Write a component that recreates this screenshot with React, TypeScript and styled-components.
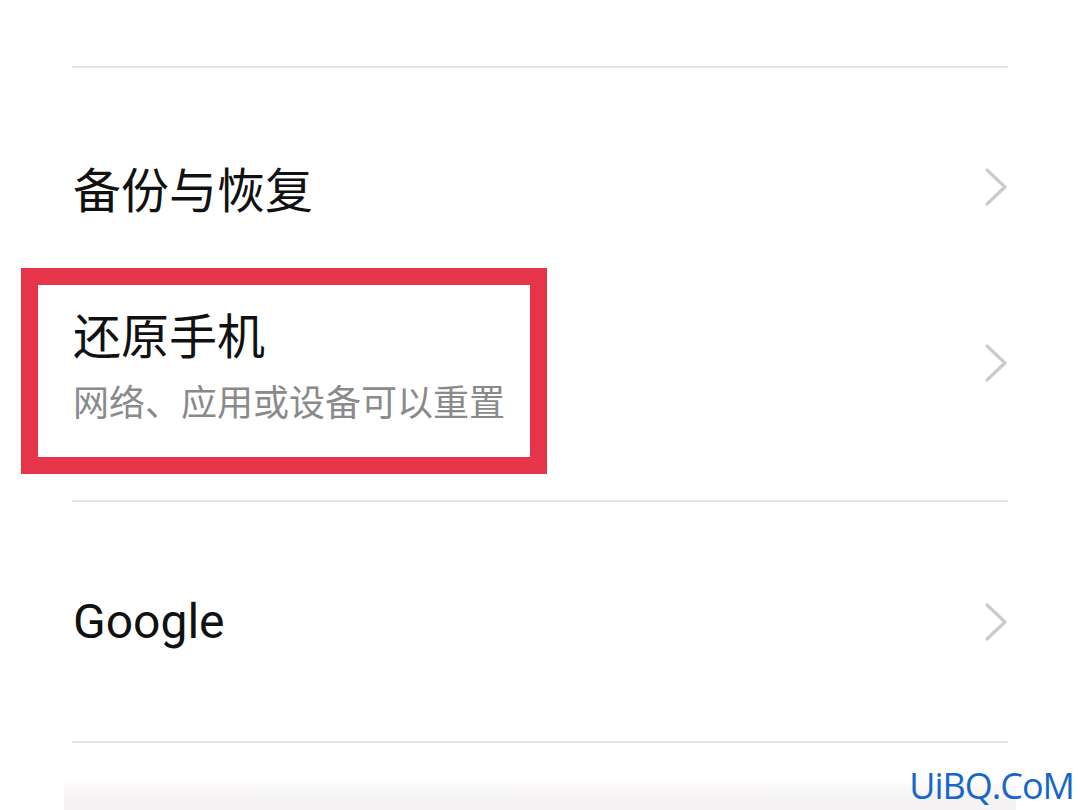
import React from "react";
import styled, { createGlobalStyle } from "styled-components";

const GlobalStyle = createGlobalStyle`
  html, body { margin: 0; padding: 0; background: #ffffff; }
  body { width: 1080px; height: 810px; overflow: hidden; }
  * { box-sizing: border-box; }
`;

const Screen = styled.div`
  position: relative;
  width: 1080px;
  height: 810px;
  overflow: hidden;
  background: #ffffff;
  padding: 66px 72px 0;
  font-family: "Noto Sans CJK SC", "Noto Sans", sans-serif;
`;

const Divider = styled.div`
  height: 2px;
  background: #e4e4e4;
`;

const Group = styled.div<{ $top: number; $bottom: number }>`
  display: flex;
  flex-direction: column;
  padding: ${(p) => p.$top}px 0 ${(p) => p.$bottom}px;
`;

const Row = styled.div<{ $h: number }>`
  position: relative;
  display: flex;
  align-items: center;
  justify-content: space-between;
  height: ${(p) => p.$h}px;
`;

const TextBlock = styled.div`
  display: flex;
  flex-direction: column;
  gap: 17px;
`;

const Title = styled.div<{ $latin?: boolean }>`
  font-family: ${(p) =>
    p.$latin
      ? 'Roboto, "Noto Sans", sans-serif'
      : '"Noto Sans CJK SC", "Noto Sans", sans-serif'};
  font-size: 48px;
  line-height: 56px;
  color: #111111;
  margin-left: 1px;
`;

const Subtitle = styled.div`
  font-size: 36px;
  line-height: 44px;
  color: #8a8a8a;
  margin-left: 1px;
`;

const Highlight = styled.div`
  position: absolute;
  left: -51px;
  top: 2px;
  width: 526px;
  height: 206px;
  border: 17px solid #e6354a;
  pointer-events: none;
`;

const Chevron = styled.svg`
  width: 24px;
  height: 40px;
  flex: none;
`;

const BottomCard = styled.div`
  margin: 40px -8px 0;
  height: 40px;
  background: linear-gradient(#fcfbfb 0%, #f5f3f3 35%, #f3f1f1 100%);
`;

const Watermark = styled.div`
  position: absolute;
  right: 6px;
  bottom: 4px;
  font-family: "Open Sans", "Liberation Sans", sans-serif;
  font-size: 36px;
  letter-spacing: -1px;
  line-height: 40px;
  color: #1766c9;
`;

const Arrow = () => (
  <Chevron viewBox="0 0 24 40">
    <path
      d="M3 3 L21 20 L3 37"
      fill="none"
      stroke="#cbcbcb"
      strokeWidth="3.2"
      strokeLinecap="round"
      strokeLinejoin="round"
    />
  </Chevron>
);

export default function App() {
  return (
    <>
      <GlobalStyle />
      <Screen>
        <Divider />
        <Group $top={40} $bottom={40}>
          <Row $h={158}>
            <Title>备份与恢复</Title>
            <Arrow />
          </Row>
          <Row $h={194}>
            <TextBlock>
              <Title>还原手机</Title>
              <Subtitle>网络、应用或设备可以重置</Subtitle>
            </TextBlock>
            <Arrow />
            <Highlight />
          </Row>
        </Group>
        <Divider />
        <Group $top={40} $bottom={39}>
          <Row $h={160}>
            <Title $latin>Google</Title>
            <Arrow />
          </Row>
        </Group>
        <Divider />
        <BottomCard />
        <Watermark>UiBQ.CoM</Watermark>
      </Screen>
    </>
  );
}
